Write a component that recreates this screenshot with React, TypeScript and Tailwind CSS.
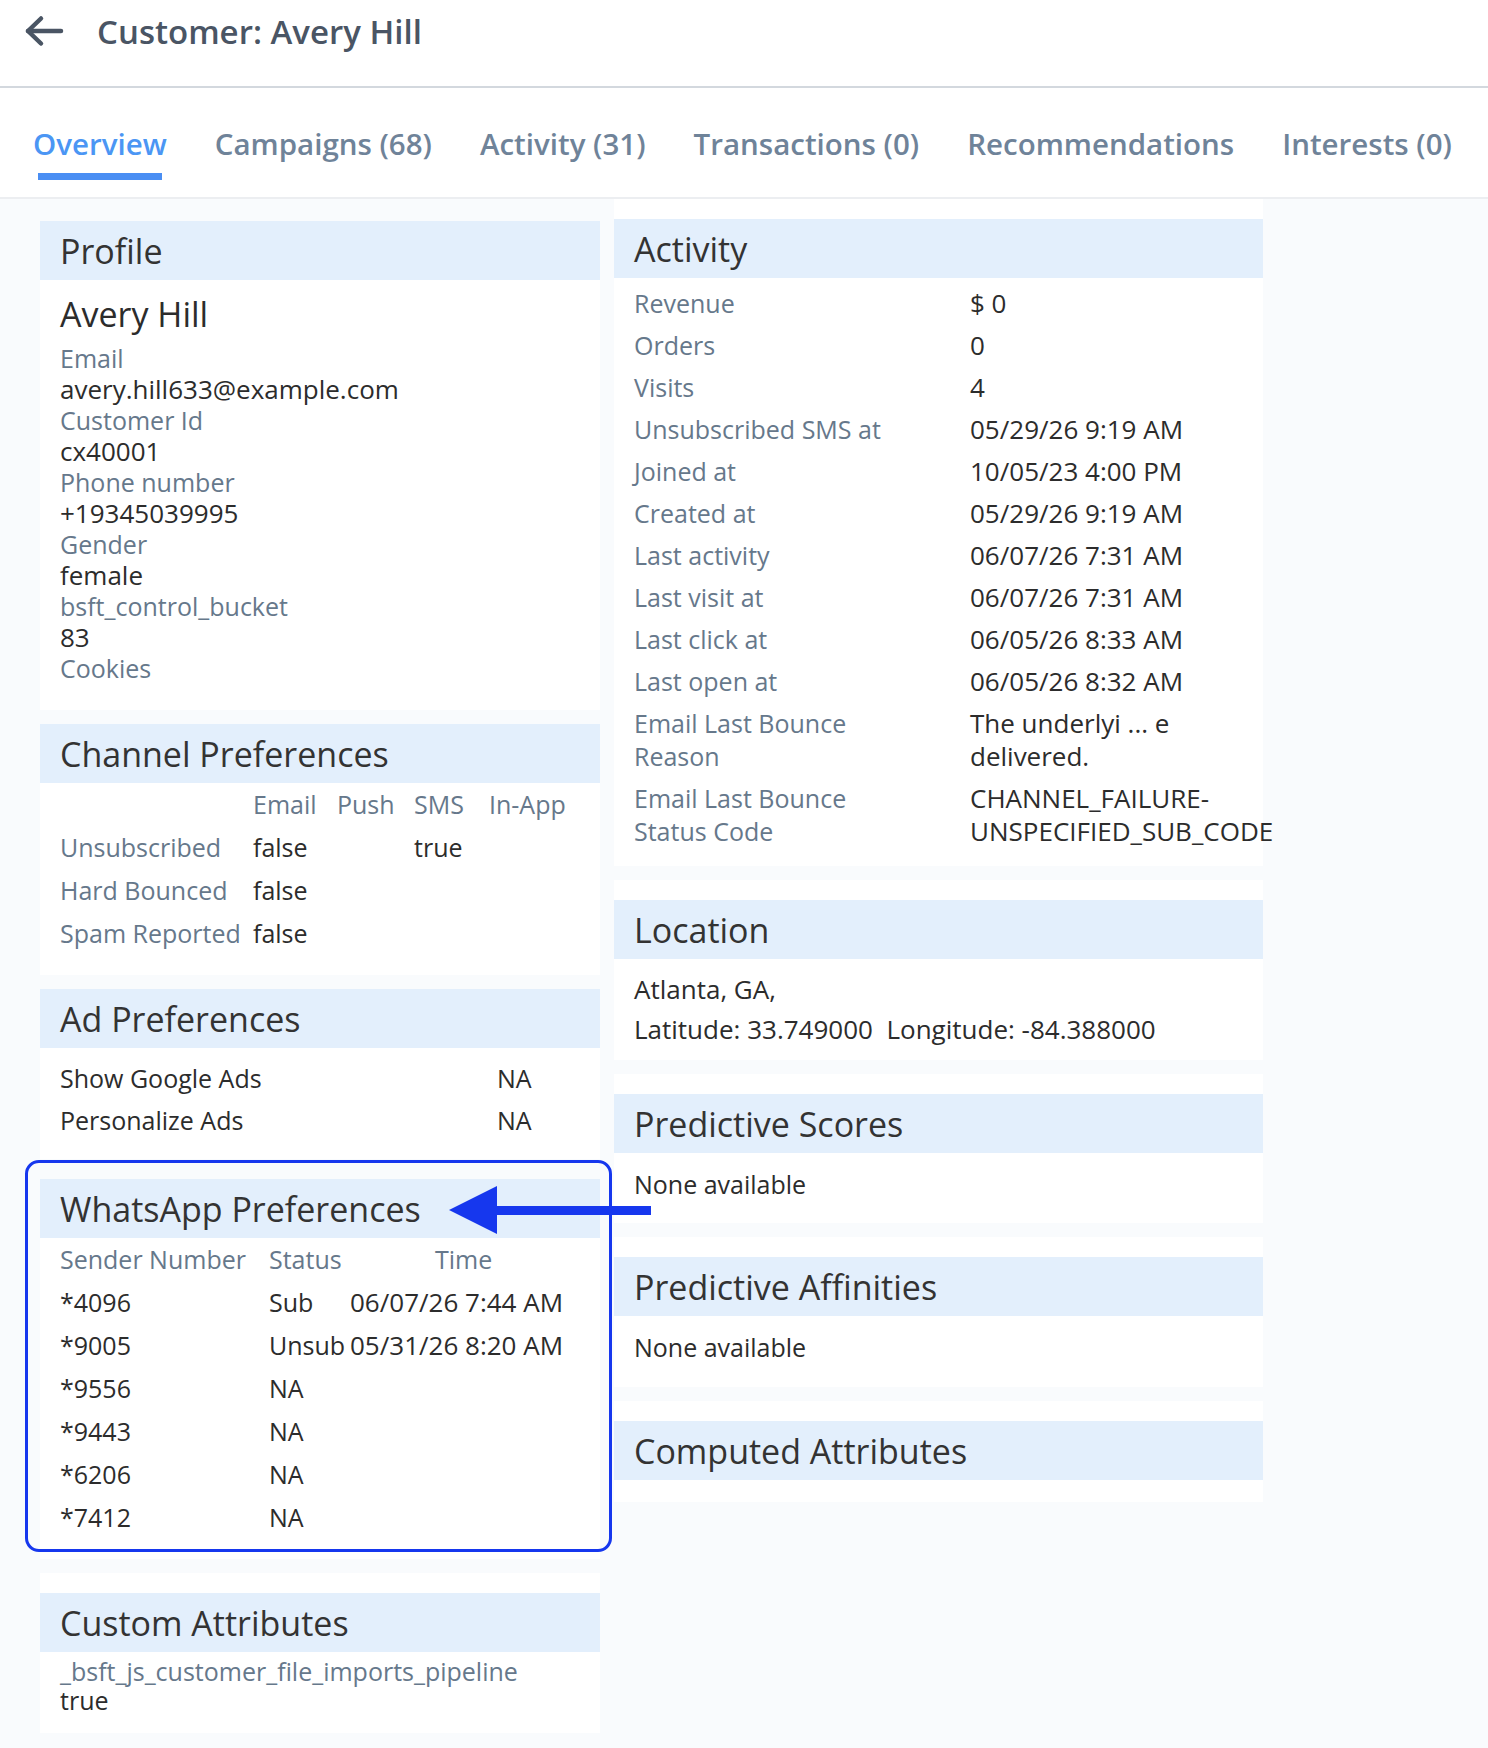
import React from 'react';

type Row = { label: string; value: string };

const profileFields: Row[] = [
    { label: 'Email', value: 'avery.hill633@example.com' },
    { label: 'Customer Id', value: 'cx40001' },
    { label: 'Phone number', value: '+19345039995' },
    { label: 'Gender', value: 'female' },
    { label: 'bsft_control_bucket', value: '83' },
];

const activityRows: Row[] = [
    { label: 'Revenue', value: '$ 0' },
    { label: 'Orders', value: '0' },
    { label: 'Visits', value: '4' },
    { label: 'Unsubscribed SMS at', value: '05/29/26 9:19 AM' },
    { label: 'Joined at', value: '10/05/23 4:00 PM' },
    { label: 'Created at', value: '05/29/26 9:19 AM' },
    { label: 'Last activity', value: '06/07/26 7:31 AM' },
    { label: 'Last visit at', value: '06/07/26 7:31 AM' },
    { label: 'Last click at', value: '06/05/26 8:33 AM' },
    { label: 'Last open at', value: '06/05/26 8:32 AM' },
    { label: 'Email Last Bounce Reason', value: 'The underlyi ... e delivered.' },
    { label: 'Email Last Bounce Status Code', value: 'CHANNEL_FAILURE-UNSPECIFIED_SUB_CODE' },
];

const channelRows = [
    { label: 'Unsubscribed', email: 'false', push: '', sms: 'true', inApp: '' },
    { label: 'Hard Bounced', email: 'false', push: '', sms: '', inApp: '' },
    { label: 'Spam Reported', email: 'false', push: '', sms: '', inApp: '' },
];

const whatsappRows = [
    { sender: '*4096', status: 'Sub', time: '06/07/26 7:44 AM' },
    { sender: '*9005', status: 'Unsub', time: '05/31/26 8:20 AM' },
    { sender: '*9556', status: 'NA', time: '' },
    { sender: '*9443', status: 'NA', time: '' },
    { sender: '*6206', status: 'NA', time: '' },
    { sender: '*7412', status: 'NA', time: '' },
];

const tabs = [
    'Overview',
    'Campaigns (68)',
    'Activity (31)',
    'Transactions (0)',
    'Recommendations',
    'Interests (0)',
];

const Card: React.FC<{ title: string; padTop?: boolean; children?: React.ReactNode }> = ({ title, padTop, children }) => (
    <section className={padTop ? 'bg-white pt-[20px]' : 'bg-white'}>
        <div className="h-[59px] bg-[#e3effc] flex items-center px-[20px]">
            <h2 className="text-[34px] text-[#333] leading-none">{title}</h2>
        </div>
        {children}
    </section>
);

const BackArrow = () => (
    <svg width="40" height="32" viewBox="0 0 40 32" fill="none" stroke="#4a5564" strokeWidth="4.5" strokeLinecap="round" strokeLinejoin="round">
        <path d="M37 16H4" />
        <path d="M17 3.5 4 16l13 12.5" />
    </svg>
);

export default function App() {
    return (
        <div className="min-h-screen w-[1488px] bg-[#f9fbfd] font-['Open_Sans',sans-serif] text-[#2c2c2c]">
            <header className="h-[88px] bg-white border-b-2 border-[#d3d8de] flex items-center pl-[24px] pb-[24px]">
                <BackArrow />
                <h1 className="ml-[33px] text-[33px] font-semibold text-[#4a5564] leading-none">Customer: Avery Hill</h1>
            </header>

            <nav className="h-[111px] bg-white border-b-2 border-[#eceef1] flex gap-[48px] pl-[33px] pt-[38px]">
                {tabs.map((tab, i) => (
                    <div key={tab} className="flex flex-col">
                        <span className={i === 0 ? 'text-[29.5px] font-semibold leading-[36px] text-[#4b96f4]' : 'text-[29.5px] font-semibold leading-[36px] text-[#6f8399]'}>
                            {tab}
                        </span>
                        {i === 0 && <div className="mt-[11px] mx-[5px] h-[7px] bg-[#4a8ef3]" />}
                    </div>
                ))}
            </nav>

            <main className="flex gap-[14px] pl-[40px]">
                {/* left column */}
                <div className="w-[560px] flex flex-col gap-[14px] pt-[22px]">
                    <Card title="Profile">
                        <div className="px-[20px] pt-[14px] pb-[26px]">
                            <div className="text-[34px] leading-[40px] mb-[9px]">Avery Hill</div>
                            {profileFields.map((f) => (
                                <div key={f.label} className="leading-[31px]">
                                    <div className="text-[25px] text-[#66788b]">{f.label}</div>
                                    <div className="text-[26px]">{f.value}</div>
                                </div>
                            ))}
                            <div className="text-[25px] leading-[31px] text-[#66788b]">Cookies</div>
                        </div>
                    </Card>

                    <Card title="Channel Preferences">
                        <div className="px-[20px] pb-[20px] text-[25px]">
                            <div className="grid grid-cols-[193px_84px_77px_75px_1fr] h-[43px] items-center text-[#66788b]">
                                <span />
                                <span>Email</span>
                                <span>Push</span>
                                <span>SMS</span>
                                <span>In-App</span>
                            </div>
                            {channelRows.map((r) => (
                                <div key={r.label} className="grid grid-cols-[193px_84px_77px_75px_1fr] h-[43px] items-center">
                                    <span className="text-[#66788b] whitespace-nowrap">{r.label}</span>
                                    <span>{r.email}</span>
                                    <span>{r.push}</span>
                                    <span>{r.sms}</span>
                                    <span>{r.inApp}</span>
                                </div>
                            ))}
                        </div>
                    </Card>

                    <Card title="Ad Preferences">
                        <div className="px-[20px] pt-[10px] pb-[17px] text-[25px]">
                            {[['Show Google Ads', 'NA'], ['Personalize Ads', 'NA']].map(([k, v]) => (
                                <div key={k} className="grid grid-cols-[437px_1fr] h-[42px] items-center">
                                    <span>{k}</span>
                                    <span>{v}</span>
                                </div>
                            ))}
                        </div>
                    </Card>

                    <div className="relative mt-[6px]">
                        <Card title="WhatsApp Preferences">
                            <div className="px-[20px] pb-[20px] text-[25px]">
                                <div className="grid grid-cols-[209px_81px_1fr] h-[43px] items-center text-[#66788b]">
                                    <span>Sender Number</span>
                                    <span>Status</span>
                                    <span className="pl-[85px]">Time</span>
                                </div>
                                {whatsappRows.map((r) => (
                                    <div key={r.sender} className="grid grid-cols-[209px_81px_1fr] h-[43px] items-center whitespace-nowrap">
                                        <span>{r.sender}</span>
                                        <span>{r.status}</span>
                                        <span className="text-[26px]">{r.time}</span>
                                    </div>
                                ))}
                            </div>
                        </Card>
                        {/* highlight outline + pointer */}
                        <div className="pointer-events-none absolute -top-[19px] -left-[15px] -right-[12px] bottom-[7px] rounded-[14px] border-[3px] border-[#1637ee]" />
                        <svg className="pointer-events-none absolute left-[408px] top-[6px]" width="203" height="50" viewBox="0 0 203 50">
                            <path d="M1 25 49 1v48z" fill="#1637ee" />
                            <rect x="46" y="21" width="157" height="9" fill="#1637ee" />
                        </svg>
                    </div>

                    <Card title="Custom Attributes" padTop>
                        <div className="px-[20px] pt-[5px] pb-[18px] text-[25px] leading-[29px]">
                            <div className="text-[#66788b]">_bsft_js_customer_file_imports_pipeline</div>
                            <div>true</div>
                        </div>
                    </Card>
                </div>

                {/* right column */}
                <div className="w-[649px] flex flex-col gap-[14px]">
                    <Card title="Activity" padTop>
                        <div className="pl-[20px] pt-[4px] pb-[14px]">
                            {activityRows.map((r) => (
                                <div key={r.label} className="flex py-[4.5px] leading-[33px]">
                                    <div className="w-[336px] shrink-0 pr-[70px] text-[25px] text-[#66788b]">{r.label}</div>
                                    <div className="w-[285px] shrink-0 text-[26px]">{r.value}</div>
                                </div>
                            ))}
                        </div>
                    </Card>

                    <Card title="Location" padTop>
                        <div className="px-[20px] pt-[10px] pb-[11px] text-[26px] leading-[40px]">
                            <div>Atlanta, GA,</div>
                            <div className="whitespace-pre">Latitude: 33.749000  Longitude: -84.388000</div>
                        </div>
                    </Card>

                    <Card title="Predictive Scores" padTop>
                        <div className="px-[20px] pt-[11px] pb-[19px] text-[25px] leading-[40px]">None available</div>
                    </Card>

                    <Card title="Predictive Affinities" padTop>
                        <div className="px-[20px] pt-[11px] pb-[20px] text-[25px] leading-[40px]">None available</div>
                    </Card>

                    <Card title="Computed Attributes" padTop>
                        <div className="h-[22px]" />
                    </Card>
                </div>
            </main>
        </div>
    );
}
